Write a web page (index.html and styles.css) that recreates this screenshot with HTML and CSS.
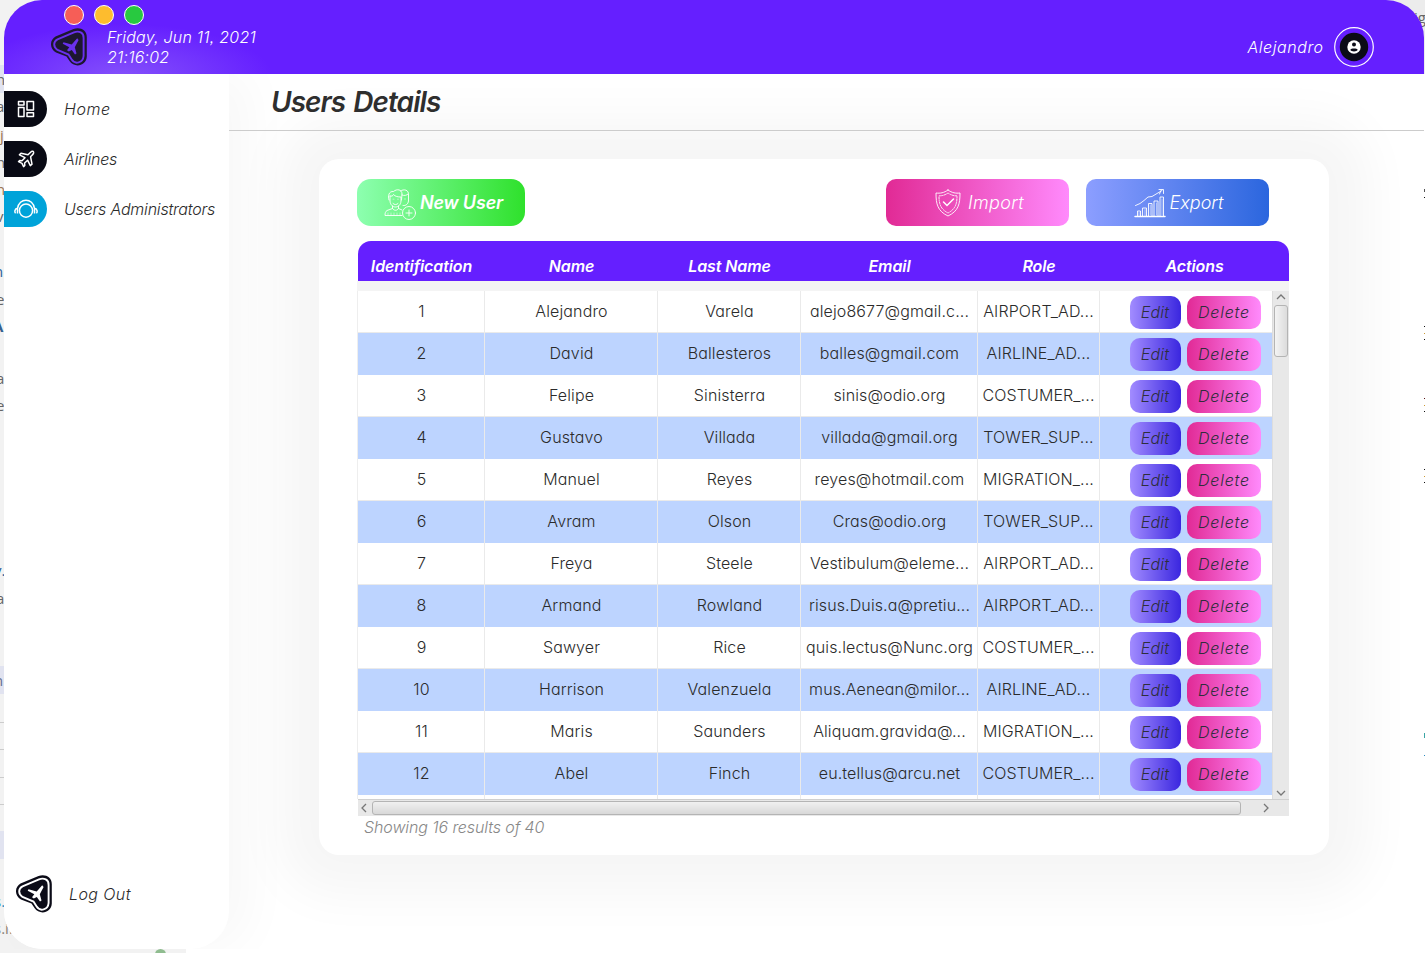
FILE: index.html
```html
<!DOCTYPE html>
<html lang="en">
<head>
<meta charset="utf-8">
<title>Users Details</title>
<link rel="stylesheet" href="styles.css">
</head>
<body>
<svg class="defs" aria-hidden="true">
  <symbol id="logo" viewBox="0 0 36 38">
    <path d="M22.500 1 C29 -1.500 35.800 2 35.800 9 V28.500 C35.500 38 23.500 40.500 18.500 33 L15.500 28.500 L5 24.500 C-1.700 20.500 -1.500 12 4.500 8.500 Z" fill="var(--ink, #0b0b17)"/>
    <path d="M23 4.300 C28 2.500 32.800 4.500 32.600 10 V28 C32 35 24 37 20.500 31.300 L17.500 26.500 L6.500 22 C2 19 2.200 13.500 6.500 11.300 Z" fill="none" stroke="var(--ring, #fff)" stroke-width="1.900"/>
    <path d="M26.200 10.300 L20.700 16.500 L12.500 14.300 L11.700 15.700 L18.300 19.300 L16 22.300 L17.800 23.500 L20.800 22 L24 26.500 L25.500 25.600 L23.800 19.300 L27.600 12 Z" fill="var(--ring, #fff)"/>
  </symbol>
</svg>

<div class="desktop-left">
  <i class="band b1"></i><i class="band b2"></i><i class="band b3"></i>
  <span class="frag f1">n</span><span class="frag f2">a</span><span class="frag f3">j</span><span class="frag f4">n</span><span class="frag f5">n</span><span class="frag f6">v</span><span class="frag f7">n</span><span class="frag f8">e</span><span class="frag f9">A</span><span class="frag f10">a</span><span class="frag f11">e</span><span class="frag f12">v.</span><span class="frag f13">a</span><span class="frag f14">n</span><span class="frag f15">s.</span><span class="frag f16">s.in</span>
</div>
<div class="desktop-right">ig</div>
<div class="desktop-edge"></div>

<div class="window">
  <header class="topbar">
    <div class="lights"><i class="red"></i><i class="yellow"></i><i class="green"></i></div>
    <svg class="logo"><use href="#logo"/></svg>
    <div class="clock"><div class="date">Friday, Jun 11, 2021</div><div class="time">21:16:02</div></div>
    <div class="account">
      <span class="who">Alejandro</span>
      <svg class="avatar" viewBox="0 0 40 40"><circle cx="20" cy="20" r="19.300" fill="none" stroke="#fff" stroke-width="1.200"/><circle cx="20" cy="20" r="14.200" fill="#0b0b17"/><circle cx="20" cy="20" r="6.700" fill="#fff"/><circle cx="20" cy="17.600" r="2" fill="#0b0b17"/><path d="M16.300 22.800 C17 20.900 23 20.900 23.700 22.800 C23 25 17 25 16.300 22.800Z" fill="#0b0b17"/></svg>
    </div>
  </header>

  <div class="body">
    <nav class="sidebar">
      <a class="item"><span class="tab"><svg viewBox="0 0 18 18"><path d="M1.500 1.500h5.500v3.600H1.500zM1.500 7.600h5.500v8.900H1.500zM10 1.500h6.500v8.500H10zM10 12.800h6.500v3.700H10z"/></svg></span><span class="home">Home</span></a>
      <a class="item"><span class="tab"><svg viewBox="0 0 18 18"><path d="M11 4.800 L13.600 2.200 C14.800 1 17 .8 16.600 3 C16.300 4.300 15 5.300 13.600 6.800 L15 14.200 L13.300 15.600 L10.600 10.200 L7.600 13 L7.800 15.500 L6.600 16.600 L5 13.400 L1.500 11.700 L2.600 10.500 L5 10.700 L8 7.700 L2.400 4.800 L4 3.200 Z"/></svg></span><span class="airlines">Airlines</span></a>
      <a class="item active"><span class="tab"><svg class="head" viewBox="0 0 24 20"><circle cx="12" cy="11.600" r="6.600"/><path d="M3.500 14.500 V9.500 C5 -1.500 19 -1.500 20.500 9.500 V14.500 M3.500 9.300 C.6 9.500 .4 13.200 1.600 14.300 M20.500 9.300 C23.400 9.500 23.600 13.200 22.400 14.300"/></svg></span><span class="admins">Users Administrators</span></a>
      <a class="logout"><svg class="logo"><use href="#logo"/></svg><span>Log Out</span></a>
    </nav>

    <main class="content">
      <h1 class="title"><span>Users Details</span></h1>
      <section class="card">
        <div class="toolbar">
          <button class="btn new"><svg viewBox="0 0 32 32"><path d="M5 12 C3.500 8 5 3 9.500 3.500 C13 .5 18 1.500 18 6 L17.500 12 M6 8 V13 C6.500 21 16.500 21 17 13 V9 C14 9 11 8.500 9.500 6.500 C9 8 7.500 8.500 6 8 M16.500 3 C20 .5 25 2 24.500 7 V13 C24 16 22 18 19 17.500 M18 7 C20 8 23 7.500 24 6 M8.500 18 V20.500 L3 22.500 C1.500 23.500 1 25 1 27.500 H18 M14.500 18 V20.500 L18 22 M8.500 20.500 C10 23 13 23 14.500 20.500 M9 15.500 C10.500 17 12.500 17 14 15.500"/><path class="fine" d="M4 25v2M7 25v2M10 25v2M13 25v2M16 25v2M9 11.200h1M13.500 11.200h1M20.500 11h1"/><circle cx="25" cy="25" r="6.500"/><path d="M25 22v6M22 25h6"/></svg><span>New User</span></button>
          <span class="grow"></span>
          <button class="btn import"><svg viewBox="0 0 26 28"><path d="M13 1 C9 4 5 4.500 1 4 C1 15 2.500 22 13 27 C23.500 22 25 15 25 4 C21 4.500 17 4 13 1Z"/><path stroke-dasharray="1.500 1.200" d="M13 4 C10 6 7 7 4 6.800 C4 15 5.500 20 13 24 C20.500 20 22 15 22 6.800 C19 7 16 6 13 4Z"/><path stroke-width="1.500" d="M8.500 13 L12 16.500 L18.500 10"/></svg><span>Import</span></button>
          <button class="btn export"><svg viewBox="0 0 32 30"><path d="M1 28.500H31" stroke-width="1.500"/><path d="M3.500 28V23H6.500V28M8.500 28V20H12.500V28M14.500 28V15.500H18V28M20 28V13H24V28M26 28V9H29.500V28M1.500 17.500 L6 15.500 L10 12.500 L14 9 L18 8.500 L23 5.500 L28 2.500 M25 1.500H29.500V5.500M25.500 6l1.500-3.500"/><path class="fine" d="M5 24.500v3M11 21.500v6M16.300 17v10M22.500 15v12M28 11v16"/></svg><span>Export</span></button>
        </div>
        <div class="table">
          <div class="thead"><span>Identification</span><span>Name</span><span>Last Name</span><span>Email</span><span>Role</span><span>Actions</span></div>
          <div class="gap"></div>
          <div class="viewport">
            <div class="rows" id="rows"></div>
            <div class="vbar"><svg viewBox="0 0 10 6"><path d="M1 5 5 1 9 5"/></svg><i></i><svg class="down" viewBox="0 0 10 6"><path d="M1 1 5 5 9 1"/></svg></div>
          </div>
          <div class="hbar"><svg viewBox="0 0 6 10"><path d="M5 1 1 5 5 9"/></svg><i></i><svg class="right" viewBox="0 0 6 10"><path d="M1 1 5 5 1 9"/></svg></div>
        </div>
        <p class="summary">Showing 16 results of 40</p>
      </section>
    </main>
  </div>
</div>
<i class="dot"></i>
<script src="rows.js"></script>
</body>
</html>
```
FILE: styles.css
```css
* { box-sizing: border-box; }
body {
  margin: 0; width: 1425px; height: 953px; overflow: hidden; position: relative;
  background: linear-gradient(#f2f2f2, #f2f2f2) 0 0 / 186px 953px no-repeat, #fff;
  font-family: Inter, "Open Sans", sans-serif; font-weight: 300; font-size: 16px; color: #2b2b2b;
  font-feature-settings: "cv11", "ss03";
}
.defs { position: absolute; width: 0; height: 0; }
.desktop-left { position: absolute; left: 0; top: 0; width: 40px; height: 953px; overflow: hidden; background: #f2f2f2; }
.desktop-left::before { content: ""; position: absolute; left: 0; top: 722px; width: 4px; height: 84px; background: repeating-linear-gradient(#ccc 0 1px, transparent 1px 27.400px); }
.band { position: absolute; left: 0; width: 4px; height: 28px; background: #e1e3f0; }
.b1 { top: 65px; } .b2 { top: 666px; } .b3 { top: 831px; }
.frag { position: absolute; left: -4px; font: 15px/20px "Open Sans", sans-serif; color: #666; }
.f1 { top: 69px; } .f2 { top: 96px; } .f3 { top: 125px; left: 0; color: #9a7350; } .f4 { top: 152px; } .f5 { top: 179px; color: #9a7350; } .f6 { top: 206px; }
.f7 { top: 261px; left: -6px; color: #2a609a; } .f8 { top: 289px; } .f9 { top: 316px; left: -7px; font-weight: 700; color: #35608f; } .f10 { top: 368px; } .f11 { top: 395px; }
.f12 { top: 560px; left: -6px; color: #2a609a; } .f13 { top: 588px; } .f14 { top: 670px; left: -6px; color: #666f90; }
.f15 { top: 891px; left: -6px; color: #2a8ac0; } .f16 { top: 918px; left: -6px; color: #8a8078; }
.desktop-right { position: absolute; right: 0; top: 0; width: 50px; height: 74px; background: #ececec; font: 15px/20px "Open Sans", sans-serif; color: #666; padding: 7px 0 0 39px; overflow: hidden; }
.desktop-edge {
  position: absolute; right: 0; top: 74px; width: 1px; height: 720px;
  background:
    linear-gradient(#555, #555) 0 115px / 1px 3px, linear-gradient(#111, #111) 0 123px / 1px 1px,
    linear-gradient(#111, #111) 0 252px / 1px 1px, linear-gradient(#c93, #c93) 0 259px / 1px 1px, linear-gradient(#111, #111) 0 265px / 1px 1px,
    linear-gradient(#511, #511) 0 324px / 1px 1px, linear-gradient(#c93, #c93) 0 331px / 1px 1px, linear-gradient(#111, #111) 0 337px / 1px 1px,
    linear-gradient(#111, #111) 0 395px / 1px 1px, linear-gradient(#c93, #c93) 0 402px / 1px 1px, linear-gradient(#111, #111) 0 408px / 1px 1px,
    linear-gradient(#3aa5a5, #3aa5a5) 0 659px / 1px 5px, linear-gradient(#2a8ac0, #2a8ac0) 0 681px / 1px 1px;
  background-repeat: no-repeat;
}
.dot { position: absolute; left: 155px; top: 949px; width: 11px; height: 11px; border-radius: 50%; background: #8fbc8f; }

.window { position: relative; width: 1420px; height: 949px; margin-left: 4px; }
.topbar {
  height: 74px; display: flex; align-items: flex-start; border-radius: 38px 38px 0 0; position: relative;
  background: radial-gradient(ellipse 150px 52px at 118px 76px, #8450fb, rgba(101, 31, 255, 0)), #651fff;
  padding-left: 47px; color: #fff;
}
.lights { position: absolute; left: 60px; top: 5px; display: flex; gap: 10px; }
.lights i { width: 20px; height: 20px; border-radius: 50%; border: 1px solid #fff; }
.red { background: #f65e57; } .yellow { background: #fdbc2e; } .green { background: #28c940; }
.logo { width: 36px; height: 38px; }
.topbar .logo { --ring: #6a30ee; --ink: #1d1730; margin-top: 28px; }
.clock { margin: 27px 0 0 20px; line-height: 20px; font-style: italic; }
.date { letter-spacing: .22px; }
.time { letter-spacing: .2px; }
.account { margin: 27px 50px 0 auto; display: flex; align-items: center; gap: 11px; font-style: italic; }
.who { letter-spacing: .55px; margin-right: -.5px; }
.avatar { width: 40px; height: 40px; }

.body { display: flex; height: 875px; background: #fff; border-radius: 0 0 0 38px; }
.sidebar { width: 225px; padding-top: 17px; display: flex; flex-direction: column; gap: 14px; background: #fff; border-radius: 0 0 38px 38px; font-style: italic; box-shadow: 20px 0 50px rgba(0, 0, 0, .03); clip-path: inset(0 -80px 0 0); }
.item { display: flex; align-items: center; height: 36px; gap: 17px; white-space: nowrap; }
.home { letter-spacing: .6px; }
.airlines { letter-spacing: -.2px; }
.admins { letter-spacing: -.2px; }
.tab { width: 43px; height: 36px; border-radius: 0 18px 18px 0; background: #090a14; display: flex; align-items: center; justify-content: center; }
.tab svg { width: 18px; height: 18px; fill: none; stroke: #fff; stroke-width: 1.500; stroke-linejoin: round; }
.tab .head { width: 24px; height: 20px; }
.active .tab { background: #00a3d9; }
.logout { margin: auto 0 36px 12px; display: flex; align-items: center; gap: 17px; letter-spacing: .4px; }

.content { flex: 1; min-width: 0; overflow: hidden; }
.title { position: relative; z-index: 1; margin: 0; height: 57px; border-bottom: 1px solid #ccc; padding-left: 42px; font-size: 28px; line-height: 57px; font-weight: 600; letter-spacing: -.95px; word-spacing: 2px; font-style: italic; color: #2e2e2e; }
.card { width: 1010px; height: 696px; margin: 28px 0 0 90px; padding: 20px 40px 0 38px; border-radius: 20px; background: #fff; box-shadow: 0 0 50px 40px #f6f6f6; }
.toolbar { display: flex; height: 47px; padding-right: 20px; }
.grow { flex: 1; }
.btn { height: 47px; border: 0; padding: 0; display: flex; align-items: center; justify-content: center; border-radius: 10px; font: italic 300 18px Inter, sans-serif; font-feature-settings: inherit; color: #fff; }
.btn svg { fill: none; stroke: #fff; stroke-width: .9; stroke-linecap: round; }
.btn .fine { stroke-width: .5; }
.new { width: 168px; border-radius: 14px; font-weight: 600; letter-spacing: -.15px; background: linear-gradient(90deg, #8dffb0, #2fe12c); gap: 4px; padding-left: 5px; }
.new svg { width: 32px; height: 32px; margin-top: 3px; }
.import { width: 183px; margin-right: 17px; letter-spacing: .35px; background: linear-gradient(90deg, #e12a95, #ff8afc); gap: 7px; padding-left: 4px; }
.import svg { width: 26px; height: 28px; }
.export { width: 183px; background: linear-gradient(90deg, #8c9eff, #2b66de); gap: 4px; padding-left: 2px; }
.export svg { width: 32px; height: 30px; }

.table { width: 932px; margin-top: 15px; }
.thead, .row { display: grid; grid-template-columns: 127px 173px 143px 177px 122px 1fr; }
.thead { height: 40px; margin-left: 1px; border-radius: 13px 13px 0 0; background: #651fff; color: #fff; font-weight: 600; letter-spacing: -.1px; font-style: italic; text-align: center; line-height: 50px; }
.gap { height: 10px; background: #f4f4f4; }
.viewport { display: flex; height: 508px; border-left: 1px solid #eee; }
.rows { width: 914px; overflow: hidden; }
.row { height: 42px; line-height: 40px; text-align: center; white-space: nowrap; letter-spacing: .12px; }
.row > span { border-right: 1px solid #eaeaea; padding-left: 1px; }
.row:nth-child(odd) > span { border-bottom: 1px solid #eaeaea; }
.row > span:last-child { border-right: 0; }
.row > .role { padding: 0; }
.row:nth-child(even) { background: #bdd4ff; }
.row .actions { display: flex; gap: 6px; padding: 5px 0 0 30px; }
.actions b { height: 33px; border-radius: 10px; line-height: 33px; font-weight: 300; font-style: italic; color: #2e2e3c; }
.actions .edit { width: 51px; padding-right: 1px; letter-spacing: .2px; background: linear-gradient(90deg, #a28cff, #3a26df); }
.actions .delete { width: 74px; letter-spacing: .8px; background: linear-gradient(90deg, #e12a95, #ff8afc); }
.vbar { width: 17px; display: flex; flex-direction: column; align-items: center; padding-top: 3px; background: #e8e8e8; border-left: 1px solid #ddd; }
.vbar svg { width: 10px; height: 6px; }
.vbar i { width: 14px; height: 52px; margin-top: 5px; border: 1px solid #b4b4b4; border-radius: 3px; background: linear-gradient(90deg, #f4f4f4, #dcdcdc); }
.vbar .down { margin: auto 0 3px; }
.vbar svg, .hbar svg { fill: none; stroke: #777; stroke-width: 1.300; }
.hbar { height: 17px; margin-left: 1px; display: flex; align-items: center; background: #e8e8e8; border-top: 1px solid #d0d0d0; padding-left: 3px; }
.hbar svg { width: 6px; height: 10px; }
.hbar i { width: 869px; height: 14px; margin-left: 5px; border: 1px solid #b4b4b4; border-radius: 3px; background: linear-gradient(#f0f0f0, #d8d8d8); }
.hbar .right { margin-left: 22px; }
.summary { margin: 1px 0 0 7px; line-height: 20px; font-style: italic; letter-spacing: -.1px; color: #888; }
```
FILE: rows.js
```js
const users = [
  ["Alejandro", "Varela", "alejo8677@gmail.c...", "AIRPORT_AD..."],
  ["David", "Ballesteros", "balles@gmail.com", "AIRLINE_AD..."],
  ["Felipe", "Sinisterra", "sinis@odio.org", "COSTUMER_..."],
  ["Gustavo", "Villada", "villada@gmail.org", "TOWER_SUP..."],
  ["Manuel", "Reyes", "reyes@hotmail.com", "MIGRATION_..."],
  ["Avram", "Olson", "Cras@odio.org", "TOWER_SUP..."],
  ["Freya", "Steele", "Vestibulum@eleme...", "AIRPORT_AD..."],
  ["Armand", "Rowland", "risus.Duis.a@pretiu...", "AIRPORT_AD..."],
  ["Sawyer", "Rice", "quis.lectus@Nunc.org", "COSTUMER_..."],
  ["Harrison", "Valenzuela", "mus.Aenean@milor...", "AIRLINE_AD..."],
  ["Maris", "Saunders", "Aliquam.gravida@...", "MIGRATION_..."],
  ["Abel", "Finch", "eu.tellus@arcu.net", "COSTUMER_..."],
  ["", "", "", ""]
];
document.getElementById("rows").innerHTML = users.map((u, i) =>
  `<div class="row"><span>${u[0] ? i + 1 : ""}</span><span>${u[0]}</span><span>${u[1]}</span><span class="email">${u[2]}</span><span class="role">${u[3]}</span>` +
  `<span class="actions">${u[0] ? '<b class="edit">Edit</b><b class="delete">Delete</b>' : ""}</span></div>`).join("");
```
